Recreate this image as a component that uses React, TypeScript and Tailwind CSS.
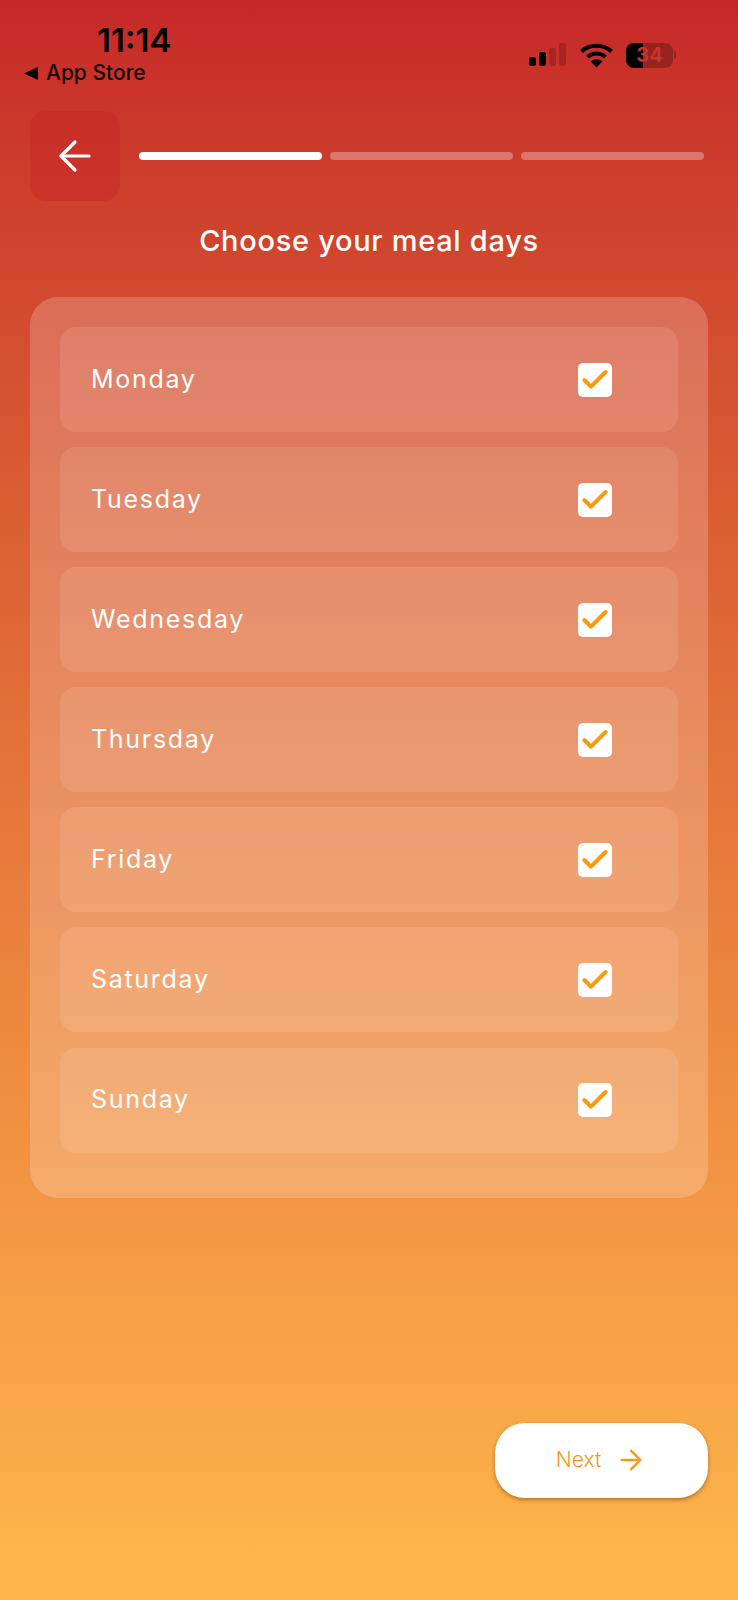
// meal plan onboarding: pick which days you want meals on
import React, { useState } from 'react';
import { ArrowLeft, ArrowRight, Check } from 'lucide-react';

const DAYS = ['Monday', 'Tuesday', 'Wednesday', 'Thursday', 'Friday', 'Saturday', 'Sunday'];

const SignalIcon = () => (
  <svg width="37" height="24" viewBox="0 0 37 24" className="block">
    <rect x="0" y="14" width="7" height="9" rx="2.5" fill="#000" />
    <rect x="10" y="9" width="7" height="14" rx="2.5" fill="#000" />
    <rect x="20" y="5" width="7" height="18" rx="2.5" fill="#000" fillOpacity="0.18" />
    <rect x="30" y="0" width="7" height="23" rx="2.5" fill="#000" fillOpacity="0.18" />
  </svg>
);

const WifiIcon = () => (
  <svg width="33" height="25" viewBox="0 0 33 25" className="block">
    <path d="M1.5 8.5 C9.5 0.8 23.5 0.8 31.5 8.5" fill="none" stroke="#000" strokeWidth="4" />
    <path d="M7.5 14 C12.5 9.4 20.5 9.4 25.5 14" fill="none" stroke="#000" strokeWidth="4" />
    <path d="M16.5 24.5 L10.6 18.4 C13.8 15.6 19.2 15.6 22.4 18.4 Z" fill="#000" />
  </svg>
);

const Battery = () => (
  <div className="flex items-center">
    <div className="relative flex h-[25px] w-[47px] items-center justify-center overflow-hidden rounded-[8px] bg-black/25">
      <div className="absolute inset-y-0 left-0 w-[17px] bg-black" />
      <span className="relative font-['Inter',sans-serif] text-[20px] font-bold leading-none text-[#c8342e]">34</span>
    </div>
    <div className="ml-[1px] h-[8px] w-[2px] rounded-r-full bg-black/25" />
  </div>
);

const StatusBar = () => (
  <div className="flex h-[111px] justify-between pl-[24px] pr-[62px]">
    <div className="flex flex-col">
      <span className="ml-[73px] mt-[22px] font-['Inter',sans-serif] text-[33px] font-semibold leading-[36px] text-black">
        11:14
      </span>
      <span className="mt-[2px] flex items-center gap-[8px] font-['Inter',sans-serif] text-[21px] font-medium leading-[26px] text-[#1a0606]">
        <svg width="14" height="13" viewBox="0 0 14 13"><path d="M0 6.5 L14 0 V13 Z" fill="#000" /></svg>
        App Store
      </span>
    </div>
    <div className="mt-[42px] flex h-[26px] items-center">
      <SignalIcon />
      <div className="ml-[14px]"><WifiIcon /></div>
      <div className="ml-[13px]"><Battery /></div>
    </div>
  </div>
);

const App = () => {
  const [checked, setChecked] = useState<string[]>(DAYS);

  const toggleDay = (day: string) => {
    setChecked((prev) => (prev.includes(day) ? prev.filter((d) => d !== day) : [...prev, day]));
  };

  return (
    <div className="flex h-[1600px] w-[738px] flex-col overflow-hidden bg-gradient-to-b from-[#c62828] to-[#ffb74d] font-['Inter',sans-serif] text-white">
      <StatusBar />

      {/* back button + step progress */}
      <div className="flex items-center pl-[30px] pr-[34px]">
        <button className="flex h-[90px] w-[90px] items-center justify-center rounded-[16px] bg-[#c62828]/50 text-white">
          <ArrowLeft size={48} strokeWidth={1.6} />
        </button>
        <div className="ml-[19px] flex flex-1 gap-[8px]">
          <div className="h-[8px] flex-1 rounded-full bg-white" />
          <div className="h-[8px] flex-1 rounded-full bg-white/30" />
          <div className="h-[8px] flex-1 rounded-full bg-white/30" />
        </div>
      </div>

      <h1 className="mt-[21px] text-center text-[29px] font-medium leading-[38px] tracking-[0.7px]">Choose your meal days</h1>

      <div className="mx-[30px] mt-[37px] flex flex-col gap-[15.1px] rounded-[28px] bg-white/20 px-[30px] pb-[45px] pt-[30px]">
        {DAYS.map((day) => (
          <div key={day} className="flex h-[105px] items-center justify-between rounded-[16px] bg-white/10 pl-[31px] pr-[66px]" onClick={() => toggleDay(day)}>
            <span className="text-[25px] font-normal tracking-[1.7px]">{day}</span>
            <div className="flex h-[34px] w-[34px] items-center justify-center rounded-[5px] bg-white text-[#f79a0e]">
              {checked.includes(day) && <Check size={32} strokeWidth={3} />}
            </div>
          </div>
        ))}
      </div>

      <div className="mt-[225px] flex justify-end pr-[30px]">
        <button className="flex h-[75px] w-[213px] items-center justify-center gap-[14px] rounded-[30px] bg-white text-[#f6971e] shadow-[0_2px_4px_rgba(120,70,0,0.55)]">
          <span className="text-[21px] font-light">Next</span>
          <ArrowRight size={32} strokeWidth={1.8} />
        </button>
      </div>
    </div>
  );
};

export default App;
